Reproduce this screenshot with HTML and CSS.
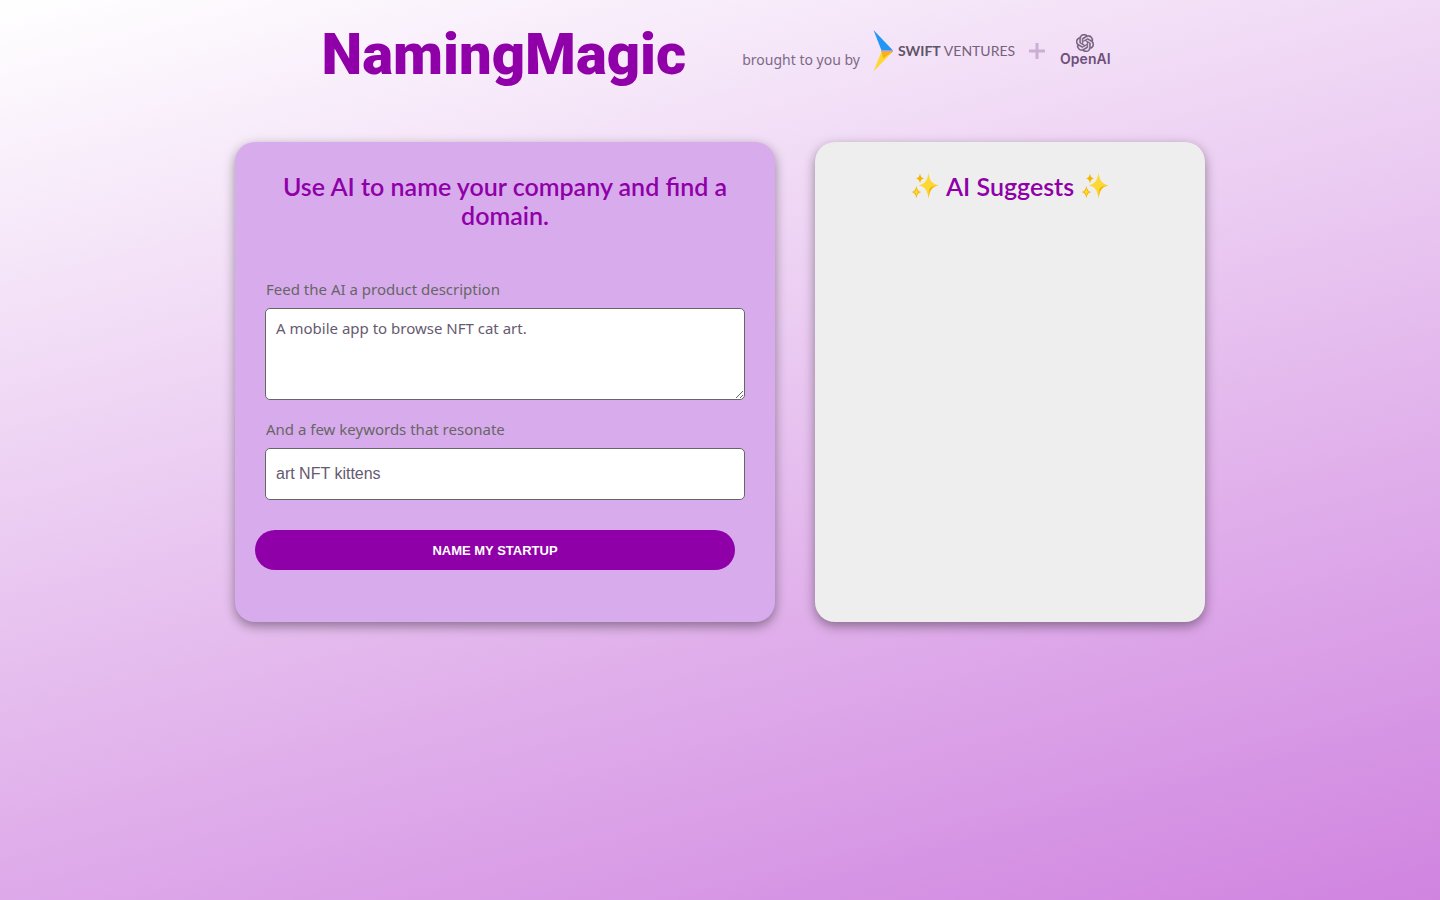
FILE: index.html
```html
<!DOCTYPE html>
<html lang="en">
<head>
<meta charset="utf-8">
<meta name="viewport" content="width=device-width, initial-scale=1">
<title>NamingMagic</title>
<link rel="stylesheet" href="styles.css">
</head>
<body>
<svg class="defs" aria-hidden="true">
  <symbol id="sparkles" viewBox="0 0 28 28">
    <path fill="#fdd835" d="M17.500 1c1.400 8 3.400 10.800 10 12.300-6.600 1.600-8.600 4.500-10 13-1.400-8.500-3.400-11.400-9.800-13C14.100 11.800 16.100 9 17.500 1z"/>
    <path fill="#f4b400" d="M17.500 26.300c1.400-8.500 3.400-11.400 10-13-4 .4-7.300 1.200-8.600 3-1.200 1.800-1.500 5.600-1.400 10z"/>
    <path fill="#f4b400" d="M9 1.500c.6 3.200 1.400 4.300 4 4.900-2.600.7-3.400 1.800-4 4.800-.6-3-1.400-4.100-4-4.800 2.600-.6 3.400-1.700 4-4.900zM5.400 13.700c.8 4 1.900 5.700 5.200 6.400-3.300.8-4.400 2.400-5.200 6.200-.8-3.800-1.900-5.400-5.200-6.200 3.300-.7 4.400-2.400 5.200-6.400z"/>
    <path fill="#fdd835" d="M5.400 15.500c.3 3 1 4.100 3 4.600-2 .5-2.700 1.600-3 4-.3-2.400-1-3.500-3-4 2-.5 2.700-1.600 3-4.600z"/>
  </symbol>
</svg>

<header class="header">
  <h1 class="brand">NamingMagic</h1>
  <div class="sponsors">
    <span class="byline">brought to you by</span>
    <div class="logos">
      <div class="swift">
        <svg class="swift-mark" viewBox="0 0 22 42" aria-hidden="true">
          <path fill="#2196f3" d="M.5 0 20 20.500H8.500z"/>
          <path fill="#fdd835" d="M8.500 21.500H20L.5 41.500z"/>
          <path fill="#f5b21c" d="M8.500 21.500H20l-10 7z"/>
          <path fill="#b287bd" d="M8 20.500h12v1H8z"/>
        </svg>
        <span class="swift-name"><b>SWIFT</b> VENTURES</span>
      </div>
      <svg class="plus" viewBox="0 0 16 16" aria-hidden="true"><path d="M8 0v16M0 8h16"/></svg>
      <div class="openai">
        <svg class="openai-mark" viewBox="0 0 24 24" aria-hidden="true"><path d="M22.2819 9.8211a5.9847 5.9847 0 0 0-.5157-4.9108 6.0462 6.0462 0 0 0-6.5098-2.9A6.0651 6.0651 0 0 0 4.9807 4.1818a5.9847 5.9847 0 0 0-3.9977 2.9 6.0462 6.0462 0 0 0 .7427 7.0966 5.98 5.98 0 0 0 .511 4.9107 6.051 6.051 0 0 0 6.5146 2.9001A5.9847 5.9847 0 0 0 13.2599 24a6.0557 6.0557 0 0 0 5.7718-4.2058 5.9894 5.9894 0 0 0 3.9977-2.9001 6.0557 6.0557 0 0 0-.7475-7.073zm-9.022 12.6081a4.4755 4.4755 0 0 1-2.8764-1.0408l.1419-.0804 4.7783-2.7582a.7948.7948 0 0 0 .3927-.6813v-6.7369l2.02 1.1686a.071.071 0 0 1 .038.052v5.5826a4.504 4.504 0 0 1-4.4945 4.4944zm-9.6607-4.1254a4.4708 4.4708 0 0 1-.5346-3.0137l.142.0852 4.783 2.7582a.7712.7712 0 0 0 .7806 0l5.8428-3.3685v2.3324a.0804.0804 0 0 1-.0332.0615L9.74 19.9502a4.4992 4.4992 0 0 1-6.1408-1.6464zM2.3408 7.8956a4.485 4.485 0 0 1 2.3655-1.9728V11.6a.7664.7664 0 0 0 .3879.6765l5.8144 3.3543-2.0201 1.1685a.0757.0757 0 0 1-.071 0l-4.8303-2.7865A4.504 4.504 0 0 1 2.3408 7.872zm16.5963 3.8558L13.1038 8.364 15.1192 7.2a.0757.0757 0 0 1 .071 0l4.8303 2.7913a4.4944 4.4944 0 0 1-.6765 8.1042v-5.6772a.79.79 0 0 0-.407-.667zm2.0107-3.0231l-.142-.0852-4.7735-2.7818a.7759.7759 0 0 0-.7854 0L9.409 9.2297V6.8974a.0662.0662 0 0 1 .0284-.0615l4.8303-2.7866a4.4992 4.4992 0 0 1 6.6802 4.66zM8.3065 12.863l-2.02-1.1638a.0804.0804 0 0 1-.038-.0567V6.0742a4.4992 4.4992 0 0 1 7.3757-3.4537l-.142.0805L8.704 5.459a.7948.7948 0 0 0-.3927.6813zm1.0976-2.3654l2.602-1.4998 2.6069 1.4998v2.9994l-2.5974 1.4997-2.6067-1.4997Z"/></svg>
        <span class="openai-name">OpenAI</span>
      </div>
    </div>
  </div>
</header>

<main class="panels">
  <section class="card card-form">
    <h2 class="title">Use AI to name your company and find a domain.</h2>
    <form class="form">
      <div class="field">
        <label for="description">Feed the AI a product description</label>
        <textarea class="control description" id="description">A mobile app to browse NFT cat art.</textarea>
      </div>
      <div class="field">
        <label for="keywords">And a few keywords that resonate</label>
        <input class="control keywords" id="keywords" type="text" value="art NFT kittens">
      </div>
      <button class="submit" type="button">NAME MY STARTUP</button>
    </form>
  </section>
  <section class="card card-results">
    <h2 class="title title-results">
      <svg class="sparkles" aria-hidden="true"><use href="#sparkles"/></svg>
      AI Suggests
      <svg class="sparkles" aria-hidden="true"><use href="#sparkles"/></svg>
    </h2>
  </section>
</main>
</body>
</html>
```
FILE: styles.css
```css
* { box-sizing: border-box; }

body {
  margin: 0;
  min-height: 100vh;
  background: linear-gradient(165deg, #ffffff 0%, #e8c4f0 48%, #d084e0 100%);
  color: #666666;
  font-family: "Noto Sans", sans-serif;
}

.defs { position: absolute; width: 0; height: 0; }

.header {
  display: flex;
  flex-wrap: wrap;
  justify-content: center;
  gap: 12px 56px;
  padding: 20px 28px 54px 20px;
}

.brand {
  margin: 0;
  color: #9000a8;
  font: 900 58px/68px Roboto, sans-serif;
}

.sponsors { display: flex; gap: 13px; height: 68px; }
.byline {
  padding-top: 30px;
  color: #7d6a88;
  font-size: 14px;
  line-height: 20px;
}

.logos { display: flex; align-items: center; height: 62px; }
.swift { display: flex; align-items: center; gap: 3px; }
.swift-mark { width: 22px; height: 42px; }
.swift-name {
  color: #74627b;
  font: 14px/16px Lato, sans-serif;
}
.swift-name b { color: #5f5466; }
.plus {
  width: 16px;
  height: 16px;
  margin: 0 15px 0 14px;
  stroke: #c9afd2;
  stroke-width: 3;
}
.openai { display: flex; flex-direction: column; align-items: center; }
.openai-mark {
  width: 18px;
  height: 18px;
  fill: #6f5c78;
  stroke: #6f5c78;
  stroke-width: 0.5;
}
.openai-name {
  padding-bottom: 2px;
  color: #6d5078;
  font: 600 14px/14px Inter, sans-serif;
}

.panels {
  display: grid;
  grid-template-columns: 54fr 39fr;
  gap: 40px;
  max-width: 1010px;
  margin: 0 auto;
  padding: 0 20px 40px;
}

.card {
  padding: 30px 20px 52px;
  border-radius: 20px;
  box-shadow: 0 4px 12px rgba(0, 0, 0, 0.4);
}
.card-form { background: #d8acec; }
.card-results { background: #eeeeee; }

.title {
  margin: 0 10px 50px;
  color: #9000a8;
  font: 600 25px/29px Lato, sans-serif;
  text-align: center;
}
.title-results {
  display: flex;
  justify-content: center;
  gap: 7px;
}
.sparkles { width: 28px; height: 28px; }

.form { display: flex; flex-direction: column; }
.field { display: flex; flex-direction: column; gap: 10px; margin: 0 10px 20px; }
.field label { padding-left: 1px; font-size: 15px; line-height: 18px; }

.control {
  width: 100%;
  padding: 8px 10px;
  border: 1px solid #666666;
  border-radius: 5px;
  background: #ffffff;
  color: #665a70;
}
.description {
  height: 92px;
  font: 15px/22px "Noto Sans", sans-serif;
  resize: vertical;
}
.keywords { height: 52px; font: 16px "Liberation Sans", Arial, sans-serif; }

.submit {
  height: 40px;
  margin: 10px 20px 0 0;
  border: 0;
  border-radius: 20px;
  background: #9000a8;
  color: #ffffff;
  font: bold 13px "Liberation Sans", Arial, sans-serif;
  cursor: pointer;
}

@media (max-width: 800px) {
  .panels { grid-template-columns: 1fr; }
}
```
